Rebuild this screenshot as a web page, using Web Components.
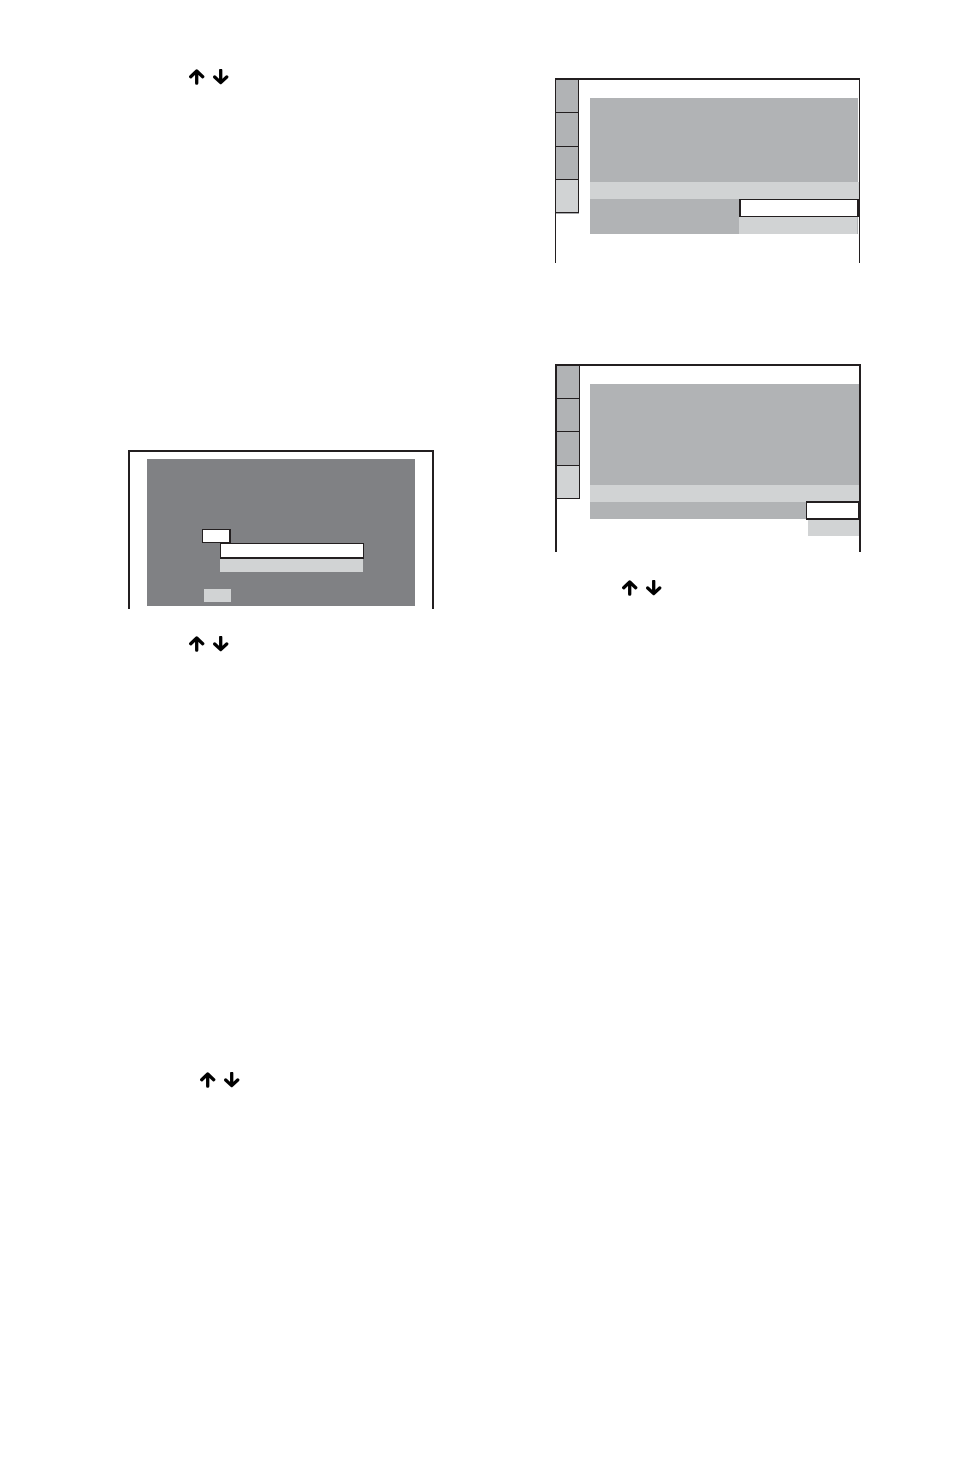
<!DOCTYPE html>
<html lang="en">
<head>
<meta charset="utf-8">
<meta name="viewport" content="width=device-width, initial-scale=1">
<title>Menu settings</title>
<style>
    body {
        margin: 0;
        background: #fff;
        font-family: "Liberation Sans", Arial, sans-serif;
        --line: #231f20;
        --mid: #b1b3b5;
        --light: #d1d3d4;
        --dark: #808184;
    }
</style>
</head>
<body>
<manual-page>
    <manual-column slot="left" style="--top: 69px">
        <arrow-keys style="--indent: 61px"></arrow-keys>
        <setup-screen style="--space: 365px"></setup-screen>
        <arrow-keys style="--indent: 61px; --space: 27px"></arrow-keys>
        <arrow-keys style="--indent: 72px; --space: 420px"></arrow-keys>
    </manual-column>
    <manual-column slot="right" style="--top: 78px">
        <menu-screen variant="wide"></menu-screen>
        <menu-screen variant="narrow" style="--space: 101px"></menu-screen>
        <arrow-keys style="--indent: 67px; --space: 28px"></arrow-keys>
    </manual-column>
</manual-page>

<script>
class ManualPage extends HTMLElement {
    connectedCallback() {
        this.attachShadow({ mode: 'open' });
        this.shadowRoot.innerHTML = `
            <style>
                :host {
                    display: block;
                    box-sizing: border-box;
                    min-height: 100vh;
                    padding: 0 93px 0 128px;
                }
                main {
                    display: grid;
                    grid-template-columns: minmax(0, 1fr) minmax(0, 1fr);
                    column-gap: 121px;
                    align-items: start;
                }
            </style>
            <main>
                <slot name="left"></slot>
                <slot name="right"></slot>
            </main>
        `;
    }
}

class ManualColumn extends HTMLElement {
    connectedCallback() {
        this.attachShadow({ mode: 'open' });
        this.shadowRoot.innerHTML = `
            <style>
                :host {
                    display: flex;
                    flex-direction: column;
                    padding-top: var(--top, 0);
                }
            </style>
            <slot></slot>
        `;
    }
}

// Up and down cursor keys
class ArrowKeys extends HTMLElement {
    connectedCallback() {
        this.attachShadow({ mode: 'open' });
        this.shadowRoot.innerHTML = `
            <style>
                :host {
                    display: flex;
                    gap: 8px;
                    margin-top: var(--space, 0);
                    padding-left: var(--indent, 0);
                }
                svg {
                    display: block;
                    width: 16px;
                    height: 16px;
                    fill: none;
                    stroke: #000;
                    stroke-width: 3.3;
                    stroke-linecap: round;
                    stroke-linejoin: round;
                }
            </style>
            <svg viewBox="0 0 16 16" aria-hidden="true">
                <path d="M7.7 14.2V2.2M1.7 7.7L7.7 2L13.7 7.7"/>
            </svg>
            <svg viewBox="0 0 16 16" aria-hidden="true">
                <path d="M7.7 1.3V13.5M1.7 8L7.7 13.6L13.7 8"/>
            </svg>
        `;
    }
}

// Grey dialog with two fields and an open list
class SetupScreen extends HTMLElement {
    connectedCallback() {
        this.attachShadow({ mode: 'open' });
        this.shadowRoot.innerHTML = `
            <style>
                :host {
                    display: block;
                    margin-top: var(--space, 0);
                    border: 2px solid var(--line);
                    border-bottom: 0;
                    padding: 7px 17px 3px;
                }
                .dialog {
                    display: flex;
                    flex-direction: column;
                    align-items: flex-start;
                    background: var(--dark);
                    padding: 70px 51px 4px 55px;
                }
                .dialog div {
                    box-sizing: border-box;
                }
                .field {
                    width: 29px;
                    height: 14px;
                    background: #fff;
                    border: 1px solid var(--line);
                    border-right-width: 2px;
                }
                .list {
                    align-self: stretch;
                    margin-left: 18px;
                }
                .selected {
                    height: 16px;
                    background: #fff;
                    border: 1px solid var(--line);
                    border-bottom-width: 2px;
                }
                .option {
                    height: 13px;
                    margin-right: 1px;
                    background: var(--light);
                }
                .value {
                    width: 27px;
                    height: 13px;
                    margin: 17px 0 0 2px;
                    background: var(--light);
                }
            </style>
            <div class="dialog">
                <div class="field"></div>
                <div class="list">
                    <div class="selected"></div>
                    <div class="option"></div>
                </div>
                <div class="value"></div>
            </div>
        `;
    }
}

// Menu with four tabs, a highlighted row and its drop-down
class MenuScreen extends HTMLElement {
    connectedCallback() {
        this.attachShadow({ mode: 'open' });
        this.shadowRoot.innerHTML = `
            <style>
                :host {
                    display: flex;
                    align-items: flex-start;
                    box-sizing: border-box;
                    margin-top: var(--space, 0);
                    border: 2px solid var(--line);
                    border-bottom: 0;
                    gap: 10px;
                    padding-bottom: 33px;
                }
                :host([variant="wide"]) {
                    margin-right: 1px;
                    border-width: 2px 1px 0;
                    gap: 11px;
                    padding-bottom: 29px;
                }
                .tabs {
                    display: grid;
                    grid-template-rows: 33px 33px 34px 33px;
                    width: 22px;
                    border-right: 1px solid var(--line);
                }
                :host([variant="wide"]) .tabs {
                    grid-template-rows: 33px 34px 33px 33px;
                    box-shadow: 0 1px 0 #a7a9ac;
                }
                .tab {
                    background: var(--mid);
                    border-bottom: 1px solid var(--line);
                }
                .tab:last-child {
                    background: var(--light);
                }
                .panel {
                    flex: 1;
                    margin-top: 18px;
                }
                .body {
                    height: 101px;
                    background: var(--mid);
                }
                .current {
                    height: 17px;
                    background: var(--light);
                }
                .rest {
                    position: relative;
                    height: 17px;
                    background: var(--mid);
                }
                :host([variant="wide"]) .body {
                    height: 84px;
                    margin-right: 1px;
                }
                :host([variant="wide"]) .rest {
                    height: 35px;
                    margin-right: 1px;
                }
                .menu {
                    position: absolute;
                    top: -1px;
                    right: 0;
                    width: 53px;
                }
                .selected {
                    box-sizing: border-box;
                    height: 19px;
                    background: #fff;
                    border: solid var(--line);
                    border-width: 2px 1px;
                }
                .option {
                    height: 16px;
                    margin-left: 2px;
                    background: var(--light);
                }
                :host([variant="narrow"]) .rest {
                    margin-bottom: 0;
                }
                :host([variant="wide"]) .menu {
                    top: 0;
                    right: -1px;
                    width: 120px;
                }
                :host([variant="wide"]) .selected {
                    height: 18px;
                    border-width: 1px 2px;
                }
                :host([variant="wide"]) .option {
                    height: 17px;
                    margin: 0 2px 0 0;
                }
            </style>
            <div class="tabs">
                <div class="tab"></div>
                <div class="tab"></div>
                <div class="tab"></div>
                <div class="tab"></div>
            </div>
            <div class="panel">
                <div class="body"></div>
                <div class="current"></div>
                <div class="rest">
                    <div class="menu">
                        <div class="selected"></div>
                        <div class="option"></div>
                    </div>
                </div>
            </div>
        `;
    }
}

customElements.define('manual-page', ManualPage);
customElements.define('manual-column', ManualColumn);
customElements.define('arrow-keys', ArrowKeys);
customElements.define('setup-screen', SetupScreen);
customElements.define('menu-screen', MenuScreen);
</script>
</body>
</html>
